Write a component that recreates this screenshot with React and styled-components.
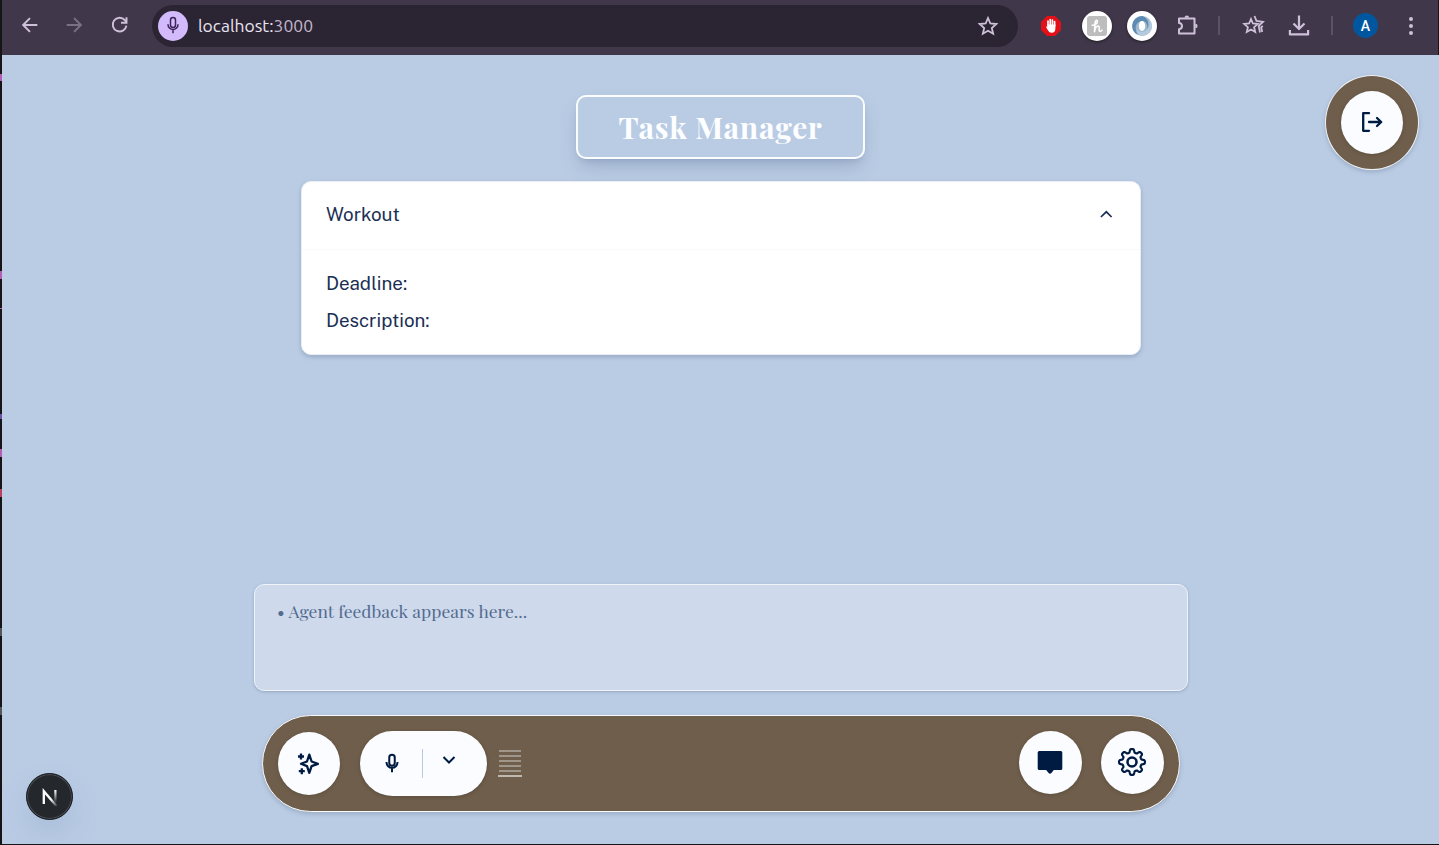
import React from 'react';
import styled, { createGlobalStyle } from 'styled-components';

const GlobalStyle = createGlobalStyle`
  *, *::before, *::after { box-sizing: border-box; }
  body { margin: 0; overflow: hidden; }
  svg { display: block; flex: none; }
  button { padding: 0; border: 0; font: inherit; color: inherit; }
`;

const serif = `'Playfair Display', 'Liberation Serif', serif`;
const sans = `'Public Sans', Inter, 'Liberation Sans', sans-serif`;
const navy = '#001b42';

const Desktop = styled.div`
  position: relative;
  width: 1439px;
  height: 845px;
  padding: 0 0 1px 2px;
  background: #151516;
  overflow: hidden;
`;

const Sliver = styled.i`
  position: absolute;
  left: 0;
  top: ${(p) => p.$top}px;
  width: 2px;
  height: ${(p) => p.$h || 8}px;
  background: ${(p) => p.$color || '#b65cb4'};
`;

const Window = styled.div`
  display: flex;
  flex-direction: column;
  height: 844px;
`;

const Toolbar = styled.header`
  display: flex;
  align-items: center;
  flex: none;
  width: 1436px;
  height: 55px;
  padding: 0 0 4px 16px;
  background: #40384a;
  color: #cec0d9;
`;

const NavButtons = styled.nav`
  display: flex;
  gap: 21px;
  margin-right: 20px;
`;

const ToolButton = styled.button`
  display: grid;
  place-items: center;
  width: 24px;
  height: 24px;
  padding: 0 1px 1px 0;
  background: none;
  opacity: ${(p) => (p.$dim ? 0.42 : 1)};
`;

const AddressBar = styled.div`
  display: flex;
  align-items: center;
  flex: none;
  width: 866px;
  height: 42px;
  padding: 0 18px 0 6px;
  border-radius: 21px;
  background: #2a2433;
`;

const MicBadge = styled.span`
  display: grid;
  place-items: center;
  width: 30px;
  height: 30px;
  padding-bottom: 1px;
  border-radius: 50%;
  background: #d3bafb;
  color: #3c2459;
`;

const Url = styled.span`
  flex: 1;
  margin-left: 10px;
  font: 400 17.5px/24px Ubuntu, 'Noto Sans', sans-serif;
  color: #ece4f2;
  span { color: #c3b8cc; }
`;

const Extensions = styled.div`
  display: flex;
  align-items: center;
  flex: none;
  margin-left: 18px;
`;

const Slot = styled.div`
  display: grid;
  place-items: center;
  width: ${(p) => p.$w || 45}px;
  height: 30px;
  margin-left: ${(p) => p.$ml || 0}px;
`;

const ExtensionDisc = styled.span`
  display: grid;
  place-items: center;
  width: 30px;
  height: 30px;
  border-radius: 50%;
  background: #fff;
  box-shadow: 0 1px 3px rgba(0, 0, 0, 0.5);
`;

const HoneyTile = styled.span`
  width: 20px;
  height: 20px;
  border-radius: 3px;
  background: #bdbdbd;
`;

const Divider = styled.span`
  width: 2px;
  height: 19px;
  background: #5c5168;
`;

const Avatar = styled.span`
  width: 25px;
  height: 25px;
  border-radius: 50%;
  background: #00579f;
  color: #fff;
  font: 500 14px/26px Roboto, sans-serif;
  text-align: center;
`;

const Page = styled.main`
  position: relative;
  display: flex;
  flex-direction: column;
  align-items: center;
  width: 1437px;
  height: 789px;
  padding-top: 40px;
  background: #bacce4;
`;

const Title = styled.h1`
  width: 289px;
  height: 64px;
  margin: 0 0 22px;
  border: 2px solid #fbfcfe;
  border-radius: 10px;
  box-shadow: 0 10px 18px -3px rgba(70, 90, 130, 0.26), 0 4px 6px -4px rgba(70, 90, 130, 0.26);
  color: #fdfeff;
  font: 700 30px/60px ${serif};
  letter-spacing: 0.75px;
  text-align: center;
  white-space: nowrap;
`;

const TaskCard = styled.section`
  width: 840px;
  height: 174px;
  margin-left: 1px;
  border: 1px solid #e9eef6;
  border-radius: 10px;
  background: #fff;
  box-shadow: 0 2px 4px rgba(60, 80, 110, 0.28);
  color: #1b2f55;
  font: 400 18.75px/28px ${sans};
  overflow: hidden;
`;

const TaskHeader = styled.div`
  display: flex;
  align-items: center;
  justify-content: space-between;
  height: 68px;
  padding: 0 27px 4px 24px;
  border-bottom: 1px solid #f8f9fb;
`;

const TaskBody = styled.dl`
  display: grid;
  gap: 9px;
  margin: 0;
  padding: 19px 24px;
  dt { height: 28px; }
`;

const Feedback = styled.section`
  width: 934px;
  height: 107px;
  margin: auto 0 24px 1px;
  padding: 12px 22px;
  border: 1px solid #eef3fa;
  border-radius: 10px;
  background: #ced9eb;
  box-shadow: 0 1px 3px rgba(60, 80, 110, 0.3);
  color: #536b8f;
  font: 400 17.5px/28px ${serif};
`;

const ControlBar = styled.footer`
  display: flex;
  align-items: center;
  width: 918px;
  height: 97px;
  margin: 0 0 32px 1px;
  padding: 0 15px;
  border: 1px solid #fafafa;
  border-radius: 49px;
  background: #6f5e4b;
  box-shadow: 0 2px 4px rgba(60, 80, 110, 0.24);
`;

const RoundButton = styled.button`
  display: grid;
  place-items: center;
  flex: none;
  width: ${(p) => p.$w || 63}px;
  height: 63px;
  border-radius: 50%;
  background: #fafcff;
  color: ${navy};
  box-shadow: 0 1px 4px rgba(0, 0, 0, 0.16);
`;

const MicPill = styled.div`
  display: flex;
  align-items: center;
  width: 127px;
  height: 65px;
  margin-left: 20px;
  padding: 0 27px 0 21px;
  border-radius: 33px;
  background: #fafcff;
  color: ${navy};
  box-shadow: 0 1px 4px rgba(0, 0, 0, 0.2);

  svg { margin-bottom: 2px; }
`;

const PillRule = styled.span`
  width: 1px;
  height: 29px;
  margin: 0 15px 0 19px;
  background: #b5cae6;
`;

const Meter = styled.div`
  display: flex;
  flex-direction: column;
  align-items: center;
  gap: 3px;
  width: 24px;
  margin: 0 auto 0 11px;
`;

const MeterLine = styled.span`
  width: ${(p) => (p.$base ? 24 : 22)}px;
  height: 2px;
  background: ${(p) => (p.$base ? '#bfb8af' : '#a1968a')};
`;

const Actions = styled.div`
  display: flex;
  gap: 19px;
  padding-bottom: 2px;

  svg { margin: 0 1px 1px 0; }
`;

const LogoutRing = styled.div`
  position: absolute;
  top: 20px;
  right: 20px;
  display: grid;
  place-items: center;
  width: 94px;
  height: 95px;
  border: 1px solid #eef2f7;
  border-radius: 50%;
  background: #6f5e4b;
  box-shadow: 0 2px 4px rgba(60, 80, 110, 0.24);

  svg { margin-bottom: 1px; }
`;

const DevBadge = styled.div`
  position: absolute;
  left: 24px;
  top: 718px;
  display: grid;
  place-items: center;
  width: 47px;
  height: 47px;
  border: 1px solid #15181b;
  border-radius: 50%;
  background: #24282d;
  box-shadow: inset 0 0 0 1px #4a4e53, 0 14px 28px rgba(100, 130, 175, 0.18);
`;

const Stroke = ({ size = 24, w = 2, children, ...rest }) => (
  <svg width={size} height={size} viewBox="0 0 24 24" fill="none" stroke="currentColor" strokeWidth={w} {...rest}>
    {children}
  </svg>
);

const MicIcon = ({ size, w = 1.8 }) => (
  <Stroke size={size} w={w}>
    <rect x="9" y="3" width="6" height="12" rx="3" />
    <path d="M6 11v.3a6 6 0 0 0 12 0V11M12 17.5V22" />
  </Stroke>
);

const star = 'M12 4l2.35 5.5 5.95.5-4.5 3.95 1.35 5.8L12 16.7l-5.15 3.05 1.35-5.8L3.7 10l5.95-.5z';

const gearPath = (() => {
  const pts = [];
  for (let i = 0; i <= 192; i += 1) {
    const a = (i / 192) * Math.PI * 2;
    const wave = Math.cos(a * 8);
    const r = 11.25 + 1.65 * Math.tanh(2.1 * wave) / Math.tanh(2.1);
    pts.push(`${(15 + r * Math.sin(a)).toFixed(2)} ${(15 - r * Math.cos(a)).toFixed(2)}`);
  }
  return `M${pts.join('L')}Z`;
})();

function BrowserBar() {
  return (
    <Toolbar>
      <NavButtons>
        <ToolButton><Stroke size={22} w={2.1}><path d="M20 12H5M12 4.5 4.5 12l7.5 7.5" /></Stroke></ToolButton>
        <ToolButton $dim><Stroke size={22} w={2.1}><path d="M3 12h15M11 4.5l7.5 7.5-7.5 7.5" /></Stroke></ToolButton>
        <ToolButton>
          <Stroke size={22} w={2.1}><path d="M19 12.7A7.5 7.5 0 1 1 17.3 6.7L19 8.700M19.100 3.500v6h-6" /></Stroke>
        </ToolButton>
      </NavButtons>
      <AddressBar>
        <MicBadge><MicIcon size={20} w={1.8} /></MicBadge>
        <Url>localhost:<span>3000</span></Url>
        <Stroke size={24} w={1.8}><path d={star} /></Stroke>
      </AddressBar>
      <Extensions>
        <Slot $w={30}>
          <svg width="20" height="20" viewBox="0 0 20 20">
            <path d="M6 0h8l6 6v8l-6 6H6l-6-6V6z" fill="#e31018" />
            <path d="M7 10V5.2M9.2 9V3.6M11.4 9V4M13.6 10V5.6" stroke="#fff" strokeWidth="1.7" strokeLinecap="round" />
            <path d="M6.2 8.5h8.2v4c0 2.8-1.3 4.3-3.6 4.3-2 0-3-.8-3.9-2.5l-1.8-3.4c.5-.6 1.1-.5 1.6.2z" fill="#fff" />
          </svg>
        </Slot>
        <Slot $ml={8}>
          <ExtensionDisc>
            <HoneyTile>
              <svg width="20" height="20" viewBox="0 0 20 20" fill="none" stroke="#fff" strokeWidth="1.6" strokeLinecap="round" strokeLinejoin="round">
                <path d="M5.2 9.2C8 9.3 10.6 7.500 10.4 5.300 10.200 3.600 8.300 4 8.100 6.800L7.500 15.600C8.200 12 9.600 9.900 11.200 10c1.600.1.900 2.200.9 3.700 0 2.200 1.800 2.300 2.800.5" />
              </svg>
            </HoneyTile>
          </ExtensionDisc>
        </Slot>
        <Slot>
          <ExtensionDisc>
            <svg width="22" height="22" viewBox="0 0 22 22">
              <circle cx="11" cy="11" r="10" fill="#9db9d1" />
              <path d="M11 1A10 10 0 0 0 7 20C3 14 4 7 11 6c4 0 6 3 5 8 3-5 1-11-5-13z" fill="#5d8ab2" />
              <path d="M11 21A10 10 0 0 0 18 4c2 8-1 12-7 13-2 0-4-1-5-3 0 4 2 6 5 7z" fill="#b5cadc" />
              <ellipse cx="11" cy="11" rx="3.2" ry="5" fill="#fff" />
            </svg>
          </ExtensionDisc>
        </Slot>
        <Slot>
          <Stroke size={24} w={2}>
            <path d="M4 4.500h15.500v15H4v-4.300c4-.3 4-6 0-6.300z" strokeLinejoin="round" />
            <path d="M9.500 3.700a2.300 2.300 0 0 1 4.600 0zM20.300 9.700a2.300 2.300 0 0 1 0 4.600z" fill="currentColor" stroke="none" />
          </Stroke>
        </Slot>
        <Slot $w={20}><Divider /></Slot>
        <Slot $w={48}>
          <Stroke size={24} w={1.8}>
            <path d="M10 5l1.900 4.500 4.900.4-3.700 3.300 1.100 4.800L10 15.500 5.800 18l1.100-4.800L3.200 9.900l4.900-.4z" />
            <path d="M13.500 2l2 5 6.500.8-4.300 4.100 1.300 6.600M21.700 11.800l-1.500 1.500 1 4.700" />
          </Stroke>
        </Slot>
        <Slot $w={43}>
          <Stroke size={24} w={2.2}>
            <path d="M12 1.500v13M6.500 9.500l5.500 5.500 5.500-5.500M2.900 16v4.400h18.200V16" strokeLinejoin="round" />
          </Stroke>
        </Slot>
        <Slot $w={24}><Divider /></Slot>
        <Slot $w={43}><Avatar>A</Avatar></Slot>
        <Slot $w={47}>
          <svg width="6" height="20" viewBox="0 0 6 20" fill="currentColor">
            <circle cx="3" cy="3" r="2" /><circle cx="3" cy="10" r="2" /><circle cx="3" cy="17" r="2" />
          </svg>
        </Slot>
      </Extensions>
    </Toolbar>
  );
}

function Controls() {
  return (
    <ControlBar>
      <RoundButton $w={62}>
        <Stroke size={24} w={2.3} strokeLinejoin="round">
          <path d="M12.3 2.7l2.3 6.800 6.300 2.300-6.300 2.300-2.300 6.800-2.300-6.800-6-2.300 6-2.300zM4 1.500v6M1 4.500h6M4.800 16.200v6M1.800 19.200h6" />
        </Stroke>
      </RoundButton>
      <MicPill>
        <MicIcon size={22} w={2.2} />
        <PillRule />
        <svg width="22" height="22" viewBox="0 0 22 22" fill="none" stroke="currentColor" strokeWidth="2">
          <path d="M5.500 5 11 10.500 16.500 5" />
        </svg>
      </MicPill>
      <Meter>
        <MeterLine /><MeterLine /><MeterLine /><MeterLine /><MeterLine /><MeterLine $base />
      </Meter>
      <Actions>
        <RoundButton>
          <svg width="26" height="26" viewBox="0 0 26 26" fill="currentColor">
            <path d="M2.200 2h21.600q1.500 0 1.500 1.500v16q0 1.500-1.500 1.500h-7l-2.400 3q-1.400 1.600-2.800 0L9.200 21h-7Q.7 21 .7 19.500v-16Q.7 2 2.200 2z" />
          </svg>
        </RoundButton>
        <RoundButton>
          <svg width="30" height="30" viewBox="0 0 30 30" fill="none" stroke="currentColor" strokeWidth="2.200" strokeLinejoin="round">
            <path d={gearPath} />
            <circle cx="15" cy="15" r="4.500" strokeWidth="2.500" />
          </svg>
        </RoundButton>
      </Actions>
    </ControlBar>
  );
}

export default function App() {
  return (
    <>
      <GlobalStyle />
      <Desktop>
        <Sliver $top={74} $h={7} />
        <Sliver $top={271} />
        <Sliver $top={308} $h={1} />
        <Sliver $top={414} $h={5} $color="#7050a0" />
        <Sliver $top={449} />
        <Sliver $top={489} $color="#b84060" />
        <Sliver $top={628} $color="#55565c" />
        <Sliver $top={707} $color="#55565c" />
        <Window>
          <BrowserBar />
          <Page>
            <Title>Task Manager</Title>
            <TaskCard>
              <TaskHeader>
                <span>Workout</span>
                <svg width="14" height="14" viewBox="0 0 14 14" fill="none" stroke="currentColor" strokeWidth="1.7">
                  <path d="M1.900 10 7.300 4.800l5.300 5.200" />
                </svg>
              </TaskHeader>
              <TaskBody>
                <dt>Deadline:</dt>
                <dt>Description:</dt>
              </TaskBody>
            </TaskCard>
            <Feedback>• Agent feedback appears here...</Feedback>
            <Controls />
            <LogoutRing>
              <RoundButton $w={62}>
                <svg width="22" height="22" viewBox="0 0 22 22" fill="none" stroke="currentColor" strokeWidth="2.300" strokeLinecap="round" strokeLinejoin="round">
                  <path d="M8 2.200H2.200v17.600H8" />
                  <path d="M8 11h12M16 7l4.200 4-4.200 4" />
                </svg>
              </RoundButton>
            </LogoutRing>
            <DevBadge>
              <svg width="18" height="18" viewBox="0 0 18 18" fill="none" strokeWidth="2.300">
                <defs>
                  <linearGradient id="fadeStem" x1="0" y1="0" x2="0" y2="1">
                    <stop offset="0" stopColor="#fff" />
                    <stop offset="1" stopColor="#fff" stopOpacity="0" />
                  </linearGradient>
                  <linearGradient id="fadeDiagonal" gradientUnits="userSpaceOnUse" x1="10" y1="11" x2="16" y2="18">
                    <stop offset="0" stopColor="#fff" />
                    <stop offset="1" stopColor="#fff" stopOpacity="0.1" />
                  </linearGradient>
                </defs>
                <path d="M2.800 16V3.200L15.500 18" stroke="url(#fadeDiagonal)" />
                <rect x="13.300" y="2" width="2.200" height="13" fill="url(#fadeStem)" />
              </svg>
            </DevBadge>
          </Page>
        </Window>
      </Desktop>
    </>
  );
}
